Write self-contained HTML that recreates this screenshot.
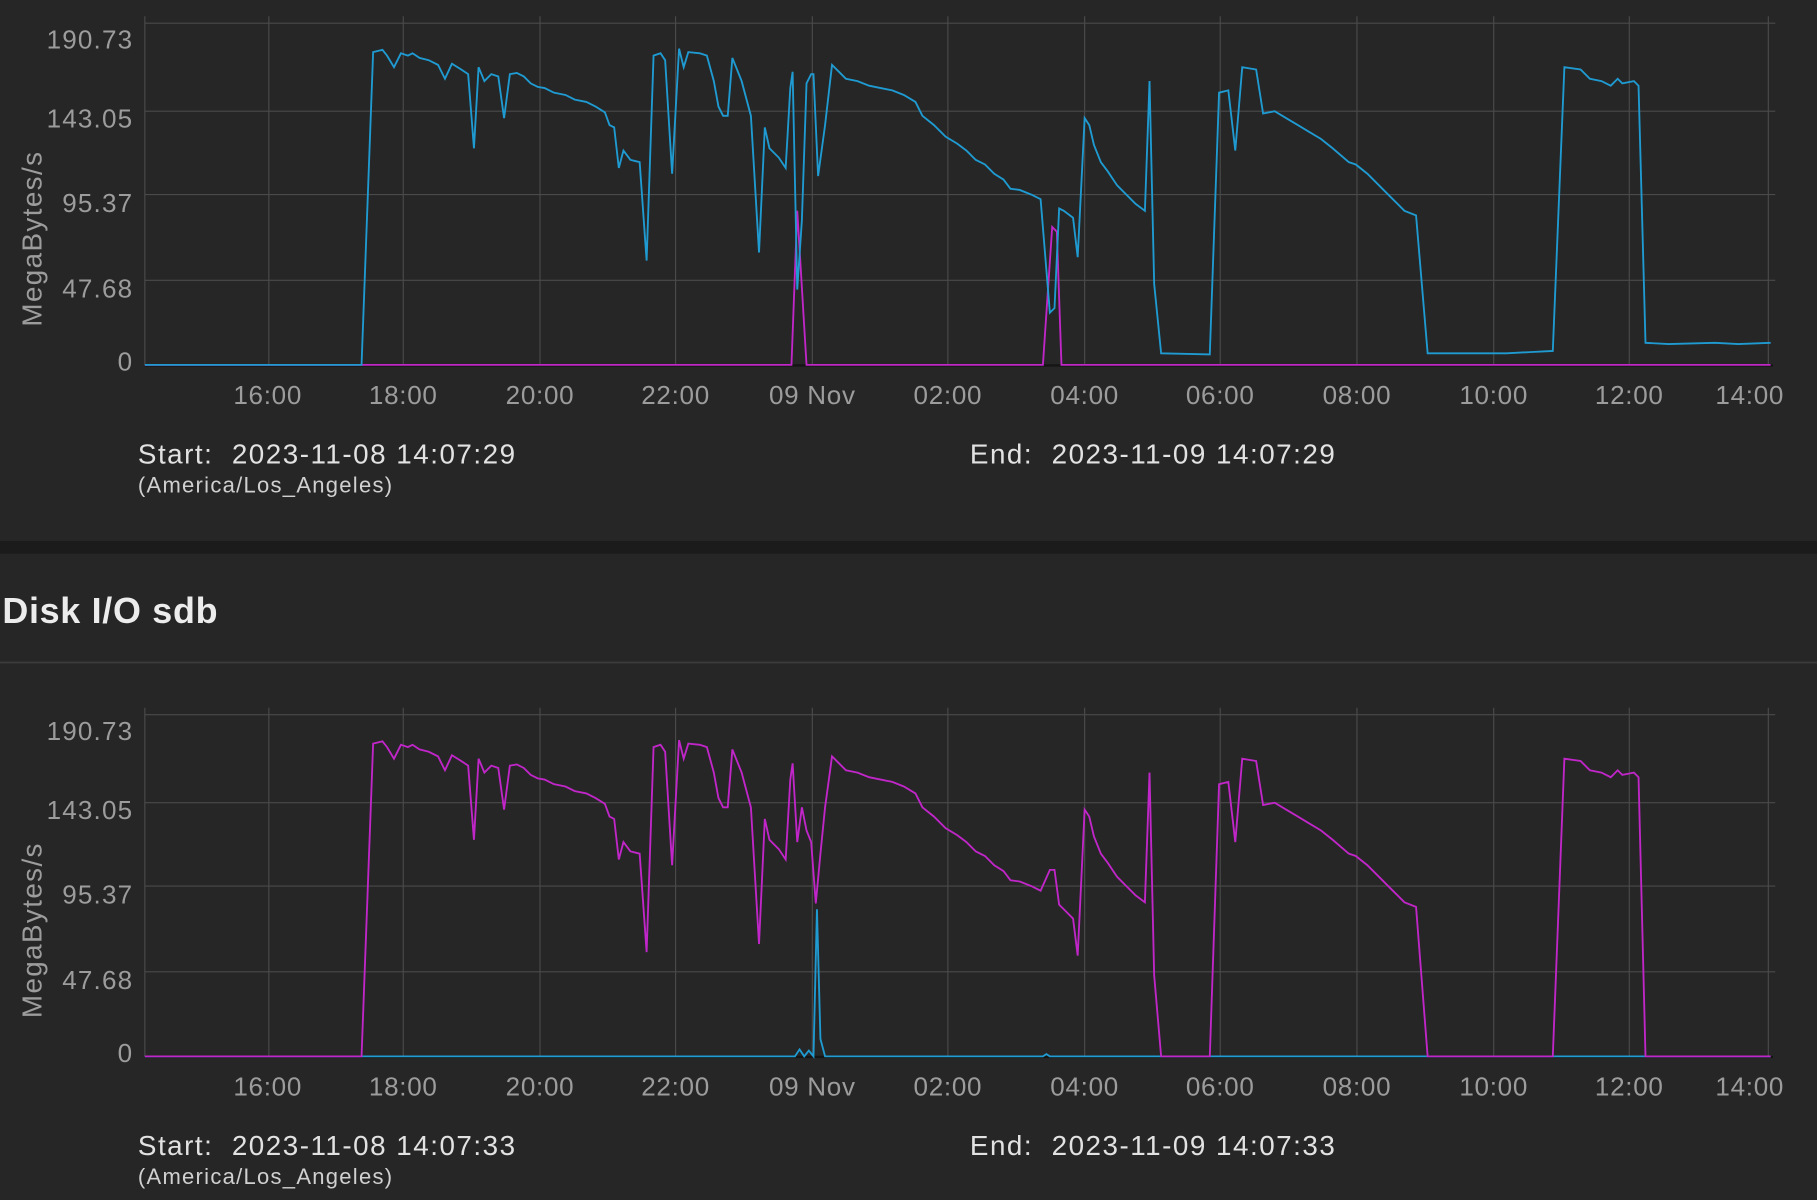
<!DOCTYPE html>
<html><head><meta charset="utf-8"><style>
html,body{margin:0;padding:0;background:#262626;width:1817px;height:1200px;overflow:hidden}
svg{display:block}
text{font-family:"Liberation Sans",sans-serif}
.ax{fill:#9c9c9c;font-size:22.5px;letter-spacing:0.6px}
.yl{fill:#9c9c9c;font-size:22.5px;letter-spacing:1px;text-anchor:end}
.st{fill:#e2e2e2;font-size:24px;letter-spacing:1.3px}
.tz{fill:#d0d0d0;font-size:19px;letter-spacing:1.1px}
.g{stroke:#4a4a4a;stroke-width:1}
</style></head><body>
<svg width="1817" height="1200" viewBox="0 0 1568 1036" preserveAspectRatio="none">
<rect width="1568" height="1036" fill="#262626"/>
<defs>
<g id="grid">
<g class="g">
<line x1="125" y1="20" x2="1532" y2="20"/><line x1="125" y1="96" x2="1532" y2="96"/>
<line x1="125" y1="168" x2="1532" y2="168"/><line x1="125" y1="242" x2="1532" y2="242"/>
<line x1="232" y1="14" x2="232" y2="315"/><line x1="348" y1="14" x2="348" y2="315"/>
<line x1="466" y1="14" x2="466" y2="315"/><line x1="583" y1="14" x2="583" y2="315"/>
<line x1="701" y1="14" x2="701" y2="315"/><line x1="818" y1="14" x2="818" y2="315"/>
<line x1="936" y1="14" x2="936" y2="315"/><line x1="1053" y1="14" x2="1053" y2="315"/>
<line x1="1171" y1="14" x2="1171" y2="315"/><line x1="1289" y1="14" x2="1289" y2="315"/>
<line x1="1406" y1="14" x2="1406" y2="315"/><line x1="1526" y1="14" x2="1526" y2="315"/>
<line x1="125" y1="14" x2="125" y2="315"/>
</g>
<line x1="125" y1="315.5" x2="1530" y2="315.5" stroke="#151515" stroke-width="2"/>
<text class="yl" x="115" y="42">190.73</text>
<text class="yl" x="115" y="110">143.05</text>
<text class="yl" x="115" y="183">95.37</text>
<text class="yl" x="115" y="257">47.68</text>
<text class="yl" x="115" y="320">0</text>
<text class="ax" transform="translate(36,206) rotate(-90)" text-anchor="middle" style="font-size:24px;letter-spacing:1.2px">MegaBytes/s</text>
<g class="ax" text-anchor="middle">
<text x="231" y="349">16:00</text><text x="348" y="349">18:00</text><text x="466" y="349">20:00</text>
<text x="583" y="349">22:00</text><text x="701" y="349">09 Nov</text><text x="818" y="349">02:00</text>
<text x="936" y="349">04:00</text><text x="1053" y="349">06:00</text><text x="1171" y="349">08:00</text>
<text x="1289" y="349">10:00</text><text x="1406" y="349">12:00</text><text x="1510" y="349">14:00</text>
</g>
</g>
</defs>

<use href="#grid"/>
<polyline fill="none" stroke="#c026c8" stroke-width="1.6" points="125,315 683,315 688,182 696,315 900,315 908,196 912,200 916,315 1528,315"/>
<polyline fill="none" stroke="#1f9bd2" stroke-width="1.6" points="125,315 312,315 322,45 330,43 334,48 340,58 346,46 352,48 356,46 362,50 370,52 378,56 384,68 390,55 398,60 404,64 409,128 413,58 418,70 424,64 430,66 435,102 440,64 446,63 452,66 458,72 464,75 470,76 478,80 488,82 496,86 506,88 514,92 522,97 526,108 530,110 534,145 538,130 544,138 552,140 558,225 564,48 570,46 574,52 580,150 586,42 590,58 594,45 604,46 610,48 616,70 620,92 624,100 628,100 632,50 640,70 648,100 655,218 660,110 664,128 672,136 678,145 682,76 684,62 688,250 692,190 696,72 700,64 702,64 706,152 712,108 718,56 724,62 730,68 740,70 750,74 760,76 770,78 780,82 790,88 796,100 806,108 816,118 826,124 834,130 842,138 850,142 858,150 866,155 872,163 880,164 890,168 898,172 906,270 910,266 914,180 918,182 926,188 930,222 936,102 940,108 944,125 950,140 956,148 964,160 972,168 980,176 988,182 992,70 996,245 1002,305 1044,306 1052,80 1060,78 1066,130 1072,58 1084,60 1090,98 1100,96 1110,102 1120,108 1130,114 1140,120 1150,128 1164,140 1170,142 1180,150 1190,160 1200,170 1212,182 1222,186 1232,305 1300,305 1320,304 1340,303 1350,58 1364,60 1372,68 1382,70 1390,74 1396,68 1400,72 1410,70 1414,74 1420,296 1440,297 1480,296 1500,297 1528,296"/>
<text class="st" x="119" y="400">Start:&#160; 2023-11-08 14:07:29</text>
<text class="tz" x="119" y="425">(America/Los_Angeles)</text>
<text class="st" x="837" y="400">End:&#160; 2023-11-09 14:07:29</text>

<rect x="0" y="467" width="1568" height="11" fill="#1b1b1b"/>
<text x="2" y="538" fill="#ececec" style="font-size:31px;font-weight:bold;letter-spacing:0.6px">Disk I/O sdb</text>
<line x1="0" y1="572" x2="1568" y2="572" stroke="#3c3c3c" stroke-width="1.5"/>

<g transform="translate(0,597)">
<use href="#grid"/>
<polyline fill="none" stroke="#1f9bd2" stroke-width="1.6" points="125,315 686,315 690,309 694,315 698,310 702,315 705,188 708,300 712,315 900,315 903,313 906,315 1528,315"/>
<polyline fill="none" stroke="#c026c8" stroke-width="1.6" points="125,315 312,315 322,45 330,43 334,48 340,58 346,46 352,48 356,46 362,50 370,52 378,56 384,68 390,55 398,60 404,64 409,128 413,58 418,70 424,64 430,66 435,102 440,64 446,63 452,66 458,72 464,75 470,76 478,80 488,82 496,86 506,88 514,92 522,97 526,108 530,110 534,145 538,130 544,138 552,140 558,225 564,48 570,46 574,52 580,150 586,42 590,58 594,45 604,46 610,48 616,70 620,92 624,100 628,100 632,50 640,70 648,100 655,218 660,110 664,128 672,136 678,145 682,76 684,62 688,130 692,100 696,120 700,130 704,183 708,140 712,100 718,56 724,62 730,68 740,70 750,74 760,76 770,78 780,82 790,88 796,100 806,108 816,118 826,124 834,130 842,138 850,142 858,150 866,155 872,163 880,164 890,168 898,172 906,154 910,154 914,184 918,188 926,196 930,228 936,102 940,108 944,125 950,140 956,148 964,160 972,168 980,176 988,182 992,70 996,245 1002,315 1044,315 1052,80 1060,78 1066,130 1072,58 1084,60 1090,98 1100,96 1110,102 1120,108 1130,114 1140,120 1150,128 1164,140 1170,142 1180,150 1190,160 1200,170 1212,182 1222,186 1232,315 1340,315 1350,58 1364,60 1372,68 1382,70 1390,74 1396,68 1400,72 1410,70 1414,74 1420,315 1528,315"/>
<text class="st" x="119" y="400">Start:&#160; 2023-11-08 14:07:33</text>
<text class="tz" x="119" y="425">(America/Los_Angeles)</text>
<text class="st" x="837" y="400">End:&#160; 2023-11-09 14:07:33</text>
</g>
</svg>
</body></html>
